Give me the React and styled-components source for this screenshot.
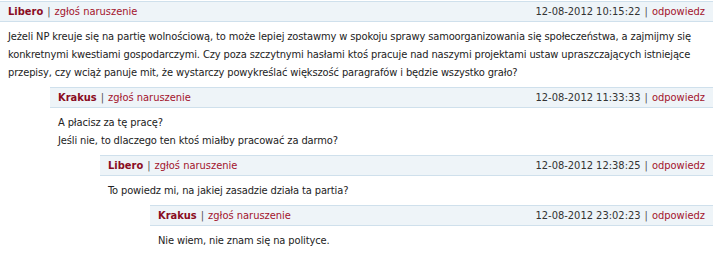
import React from "react";
import styled, { createGlobalStyle } from "styled-components";

const Global = createGlobalStyle`
  html, body { margin: 0; padding: 0; background: #fff; }
  body { font-family: "DejaVu Sans Condensed", "DejaVu Sans", sans-serif; font-size: 11px; color: #222; }
`;

const Page = styled.div`
  width: 713px;
  padding-top: 1px;
`;

const Comment = styled.div`
  margin-left: ${(p) => p.$depth * 50}px;
`;

const Header = styled.div`
  display: flex;
  justify-content: space-between;
  align-items: center;
  height: 19px;
  padding: 0 8px;
  background: #eef4f8;
  border-top: 1px solid #cfe0ec;
  border-bottom: 1px solid #cfe0ec;
  color: #333;
`;

const Author = styled.span`
  font-weight: bold;
  color: #8a0c22;
`;

const Sep = styled.span`
  color: #555;
  margin: 0 4px;
`;

const RedLink = styled.a`
  color: #a3132c;
  text-decoration: none;
`;

const Body = styled.div`
  padding: 6px 4px 5px 8px;
  line-height: 18px;
  letter-spacing: -0.12px;
  color: #222;
`;

const data = [
  {
    depth: 0,
    author: "Libero",
    date: "12-08-2012 10:15:22",
    lines: [
      "Jeżeli NP kreuje się na partię wolnościową, to może lepiej zostawmy w spokoju sprawy samoorganizowania się społeczeństwa, a zajmijmy się konkretnymi kwestiami gospodarczymi. Czy poza szczytnymi hasłami ktoś pracuje nad naszymi projektami ustaw upraszczających istniejące przepisy, czy wciąż panuje mit, że wystarczy powykreślać większość paragrafów i będzie wszystko grało?",
    ],
  },
  {
    depth: 1,
    author: "Krakus",
    date: "12-08-2012 11:33:33",
    lines: ["A płacisz za tę pracę?", "Jeśli nie, to dlaczego ten ktoś miałby pracować za darmo?"],
  },
  {
    depth: 2,
    author: "Libero",
    date: "12-08-2012 12:38:25",
    lines: ["To powiedz mi, na jakiej zasadzie działa ta partia?"],
  },
  {
    depth: 3,
    author: "Krakus",
    date: "12-08-2012 23:02:23",
    lines: ["Nie wiem, nie znam się na polityce."],
  },
];

export default function App() {
  return (
    <Page>
      <Global />
      {data.map((c, i) => (
        <Comment key={i} $depth={c.depth}>
          <Header>
            <span>
              <Author>{c.author}</Author>
              <Sep>|</Sep>
              <RedLink href="#">zgłoś naruszenie</RedLink>
            </span>
            <span>
              {c.date}
              <Sep>|</Sep>
              <RedLink href="#">odpowiedz</RedLink>
            </span>
          </Header>
          <Body>
            {c.lines.map((l, j) => (
              <div key={j}>{l}</div>
            ))}
          </Body>
        </Comment>
      ))}
    </Page>
  );
}
